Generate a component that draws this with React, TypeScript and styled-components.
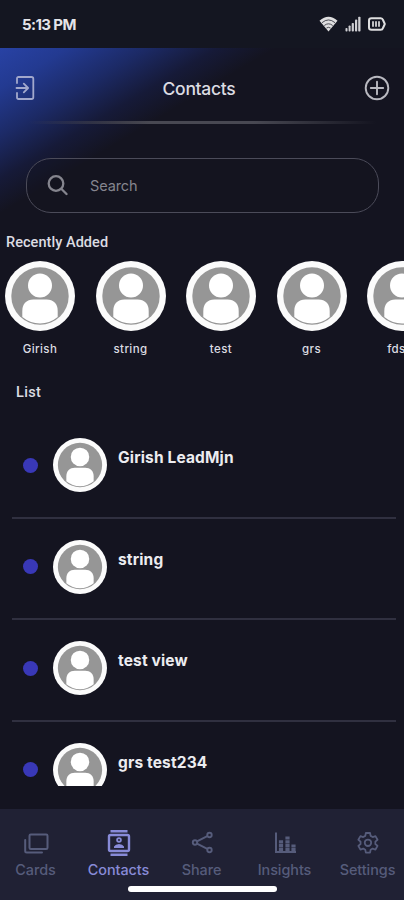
import React from "react";
import styled, { createGlobalStyle } from "styled-components";

const GlobalStyle = createGlobalStyle`
  * { box-sizing: border-box; }
  body { margin: 0; background: #141420; }
`;

const Screen = styled.div`
  width: 404px;
  height: 900px;
  display: flex;
  flex-direction: column;
  overflow: hidden;
  background: #141420;
  color: #dcdce2;
  font-family: Inter, Roboto, sans-serif;
`;

const StatusBar = styled.div`
  height: 48px;
  flex: none;
  display: flex;
  align-items: center;
  justify-content: space-between;
  padding: 0 18px 0 22px;
  background: #141621;
`;

const Clock = styled.span`
  font-size: 15px;
  font-weight: 700;
  letter-spacing: -0.6px;
  color: #e4e4e8;
`;

const StatusIcons = styled.div`
  display: flex;
  align-items: center;
  gap: 7px;
  svg { display: block; }
`;

const Content = styled.main`
  height: 761px;
  flex: none;
  display: flex;
  flex-direction: column;
  overflow: hidden;
  background: linear-gradient(149deg, #2842a4 0px, #233a91 35px, #1c2a66 76px, #161a38 112px, #141420 142px);
`;

const Header = styled.header`
  height: 73px;
  flex: none;
  display: flex;
  align-items: center;
  justify-content: space-between;
  padding: 7px 14px 0 15px;
  svg { display: block; }
`;

const Title = styled.h1`
  margin: 0;
  font-size: 17.5px;
  font-weight: 500;
  letter-spacing: -0.3px;
  padding-right: 1px;
`;

const HeaderRule = styled.div`
  height: 3px;
  flex: none;
  margin: 0 28px;
  background: linear-gradient(90deg, transparent, #484852 35%, #484852 65%, transparent);
`;

const SearchBox = styled.div`
  height: 55px;
  flex: none;
  margin: 34px 25px 0 26px;
  padding: 0 0 0 20px;
  display: flex;
  align-items: center;
  gap: 22px;
  border: 1.5px solid #4b4b59;
  border-radius: 25px;
  font-size: 14.5px;
  letter-spacing: -0.1px;
  color: #85858e;
  background: rgba(20, 20, 32, 0.35);
`;

const RecentTitle = styled.h2`
  margin: 21px 0 0 6px;
  flex: none;
  font: 500 14.5px/18px Roboto, sans-serif;
  letter-spacing: 0.05px;
`;

const RecentList = styled.div`
  display: flex;
  flex: none;
  gap: 20.5px;
  margin: 9px 0 0 5px;
`;

const RecentItem = styled.div`
  width: 70px;
  flex: none;
  display: flex;
  flex-direction: column;
  align-items: center;
`;

const RecentName = styled.span`
  margin-top: 10px;
  font-size: 11.5px;
  font-weight: 500;
  line-height: 16px;
  letter-spacing: 0.4px;
`;

const ListTitle = styled.h2`
  flex: none;
  margin: 27px 0 0 16px;
  font: 500 14.5px/18px Roboto, sans-serif;
  letter-spacing: 0.3px;
`;

const ContactList = styled.div`
  height: 371px;
  flex: none;
  margin: 13px 8px 0 12px;
  padding-top: 2px;
  overflow: hidden;
`;

const ContactRow = styled.div`
  height: 101.5px;
  display: grid;
  grid-template-columns: 15px 54px 1fr;
  align-items: center;
  padding: 0 0 3px 11px;
  border-bottom: 2px solid #303040;
  column-gap: 15px;
`;

const Dot = styled.span`
  width: 15px;
  height: 15px;
  border-radius: 50%;
  background: #3938b7;
`;

const ContactName = styled.span`
  font-size: 15.5px;
  font-weight: 700;
  letter-spacing: 0.15px;
  line-height: 20px;
  margin: -14px 0 0 -4px;
  color: #ececf0;
`;

const NavBar = styled.nav`
  height: 91px;
  flex: none;
  display: flex;
  flex-direction: column;
  align-items: center;
  justify-content: space-between;
  background: #202134;
`;

const NavItems = styled.div`
  align-self: stretch;
  display: grid;
  grid-template-columns: repeat(5, 83px);
  margin: 20px 0 0 -6px;
`;

const NavItem = styled.div<{ $active: boolean }>`
  display: flex;
  flex-direction: column;
  align-items: center;
  gap: 4px;
  font-size: 14.4px;
  font-weight: 500;
  line-height: 18px;
  letter-spacing: -0.05px;
  color: ${(p) => (p.$active ? "#888bd8" : "#565c7b")};
`;

const NavIcon = styled.div`
  height: 28px;
  svg { display: block; }
`;

const HomeIndicator = styled.div`
  width: 149px;
  height: 6px;
  margin-bottom: 8px;
  margin-left: 1px;
  border-radius: 3px;
  background: #fff;
`;

const Avatar = ({ size }: { size: number }) => (
  <svg width={size} height={size} viewBox="0 0 70 70">
    <circle cx="35" cy="35" r="35" fill="#fbfbfb" />
    <circle cx="35" cy="35" r="28.700" fill="#969696" />
    <circle cx="35" cy="24.500" r="12" fill="#fff" />
    <path d="M17.300 50c0-7.500 4.500-11.500 11-11.500h13.400c6.500 0 11 4 11 11.500v6q-8 6.500-17.700 6.500T17.300 56z" fill="#fff" />
  </svg>
);

const WifiIcon = () => (
  <svg width="19" height="16" viewBox="0 0 19 16">
    <path d="M.5 4.800Q9.500-3.500 18.500 4.800L9.500 15.500z" fill="#dededf" />
    <path d="M3 6.700q6.500-5.500 13 0M5.300 9.500q4.200-3.400 8.400 0M7.500 12q2-1.400 4 0" fill="none" stroke="#24252f" strokeWidth=".8" />
  </svg>
);

const SignalIcon = () => (
  <svg width="16" height="16" viewBox="0 0 16 16" fill="#cfcfd3">
    <rect x=".5" y="12" width="2" height="3.500" rx=".8" />
    <rect x="3.600" y="9.500" width="2" height="6" rx=".8" />
    <rect x="6.700" y="7" width="2.200" height="8.500" rx=".8" />
    <rect x="10" y="3.500" width="2.200" height="12" rx=".8" />
    <rect x="13.200" y=".8" width="2.300" height="14.700" rx=".8" />
  </svg>
);

const BatteryIcon = () => (
  <svg width="18" height="14" viewBox="0 0 18 14" fill="none" stroke="#dededf">
    <path d="M3.500 1.200h9.300q1.700 0 2.200 1.800l1.800 4-1.800 4q-.5 1.800-2.200 1.800H3.500Q1 12.800 1 10.500v-7Q1 1.200 3.500 1.200z" strokeWidth="2" strokeLinejoin="round" />
    <path d="M5 4.200v5.600M8 4.200v5.600M11 4.200v5.600" strokeWidth="1.700" />
  </svg>
);

const ExitIcon = () => (
  <svg width="20" height="24" viewBox="0 0 20 24" fill="none" stroke="#a2a8cc" strokeWidth="1.800" strokeLinecap="round" strokeLinejoin="round">
    <path d="M2 7V2.500Q2 1 3.500 1h13Q18.300 1 18.300 2.800v18.400Q18.300 23 16.500 23h-13Q2 23 2 21.500V17" />
    <path d="M1.500 12H13M8.800 7.700l4.300 4.300-4.300 4.300" />
  </svg>
);

const AddIcon = () => (
  <svg width="26" height="26" viewBox="0 0 26 26" fill="none" stroke="#b9b9c0" strokeWidth="1.900" strokeLinecap="round">
    <circle cx="13" cy="13" r="11.300" />
    <path d="M6.800 13h12.400M13 6.800v12.400" />
  </svg>
);

const SearchIcon = () => (
  <svg width="21" height="21" viewBox="0 0 21 21" fill="none" stroke="#85858e" strokeWidth="2.300" strokeLinecap="round">
    <circle cx="9" cy="8.500" r="7.300" />
    <path d="m14.500 14 5 5" />
  </svg>
);

const CardsIcon = () => (
  <svg width="26" height="26" viewBox="0 0 26 26" fill="none" stroke="currentColor" strokeWidth="2" strokeLinejoin="round" strokeLinecap="round">
    <rect x="6.500" y="5.500" width="18" height="14.500" rx="1.300" />
    <path d="M2.200 11v11q0 1.500 1.500 1.500H19" />
  </svg>
);

const ContactsIcon = () => (
  <svg width="26" height="28" viewBox="0 0 26 28" fill="none" stroke="currentColor" strokeWidth="2.400">
    <path d="M4.500 2.200h17M4.500 25.800h17" />
    <rect x="3" y="6" width="20" height="16" rx="1.500" />
    <circle cx="13" cy="11" r="1.900" strokeWidth="1.800" />
    <path d="M8 19v-1.500q1.500-2.500 5-2.500t5 2.500V19z" fill="currentColor" stroke="none" />
  </svg>
);

const ShareIcon = () => (
  <svg width="26" height="26" viewBox="0 0 26 26" fill="none" stroke="currentColor" strokeWidth="1.900">
    <circle cx="6" cy="13.500" r="2.200" />
    <circle cx="20.500" cy="6" r="2.200" />
    <circle cx="20.500" cy="21" r="2.200" />
    <path d="m8 12.400 10.300-5.300M8 14.600l10.300 5.300" />
  </svg>
);

const InsightsIcon = () => (
  <svg width="26" height="26" viewBox="0 0 26 26" fill="none" stroke="currentColor">
    <path d="M4 3.500v19.500h20" strokeWidth="2" />
    <path d="M9 22V11M15.500 22V7.500M21.500 22v-6.500" strokeWidth="4.200" strokeDasharray="3.200 .6" />
  </svg>
);

const SettingsIcon = () => (
  <svg width="26" height="28" viewBox="0 0 26 28" fill="none" stroke="currentColor" strokeWidth="1.900" strokeLinejoin="round">
    <g transform="translate(.6 .2) scale(.95)">
      <path d="M10.800 4h4.400l.6 3 2.200 1.300 2.900-1 2.200 3.800-2.300 2v2.500l2.300 2-2.200 3.800-2.900-1-2.200 1.300-.6 3h-4.400l-.6-3L8 20.400l-2.900 1-2.200-3.800 2.300-2v-2.500l-2.300-2 2.200-3.800 2.900 1L10.200 7z" />
      <circle cx="13" cy="14.300" r="3.400" />
    </g>
  </svg>
);

const recent = ["Girish", "string", "test", "grs", "fdsfs"];

const contacts = ["Girish LeadMjn", "string", "test view", "grs test234"];

const tabs = [
  { label: "Cards", Icon: CardsIcon },
  { label: "Contacts", Icon: ContactsIcon },
  { label: "Share", Icon: ShareIcon },
  { label: "Insights", Icon: InsightsIcon },
  { label: "Settings", Icon: SettingsIcon },
];

export default function App() {
  return (
    <Screen>
      <GlobalStyle />
      <StatusBar>
        <Clock>5:13 PM</Clock>
        <StatusIcons>
          <WifiIcon />
          <SignalIcon />
          <BatteryIcon />
        </StatusIcons>
      </StatusBar>
      <Content>
        <Header>
          <ExitIcon />
          <Title>Contacts</Title>
          <AddIcon />
        </Header>
        <HeaderRule />
        <SearchBox>
          <SearchIcon />
          <span>Search</span>
        </SearchBox>
        <RecentTitle>Recently Added</RecentTitle>
        <RecentList>
          {recent.map((name) => (
            <RecentItem key={name}>
              <Avatar size={70} />
              <RecentName>{name}</RecentName>
            </RecentItem>
          ))}
        </RecentList>
        <ListTitle>List</ListTitle>
        <ContactList>
          {contacts.map((name) => (
            <ContactRow key={name}>
              <Dot />
              <Avatar size={54} />
              <ContactName>{name}</ContactName>
            </ContactRow>
          ))}
        </ContactList>
      </Content>
      <NavBar>
        <NavItems>
          {tabs.map(({ label, Icon }) => (
            <NavItem key={label} $active={label === "Contacts"}>
              <NavIcon>
                <Icon />
              </NavIcon>
              <span>{label}</span>
            </NavItem>
          ))}
        </NavItems>
        <HomeIndicator />
      </NavBar>
    </Screen>
  );
}
